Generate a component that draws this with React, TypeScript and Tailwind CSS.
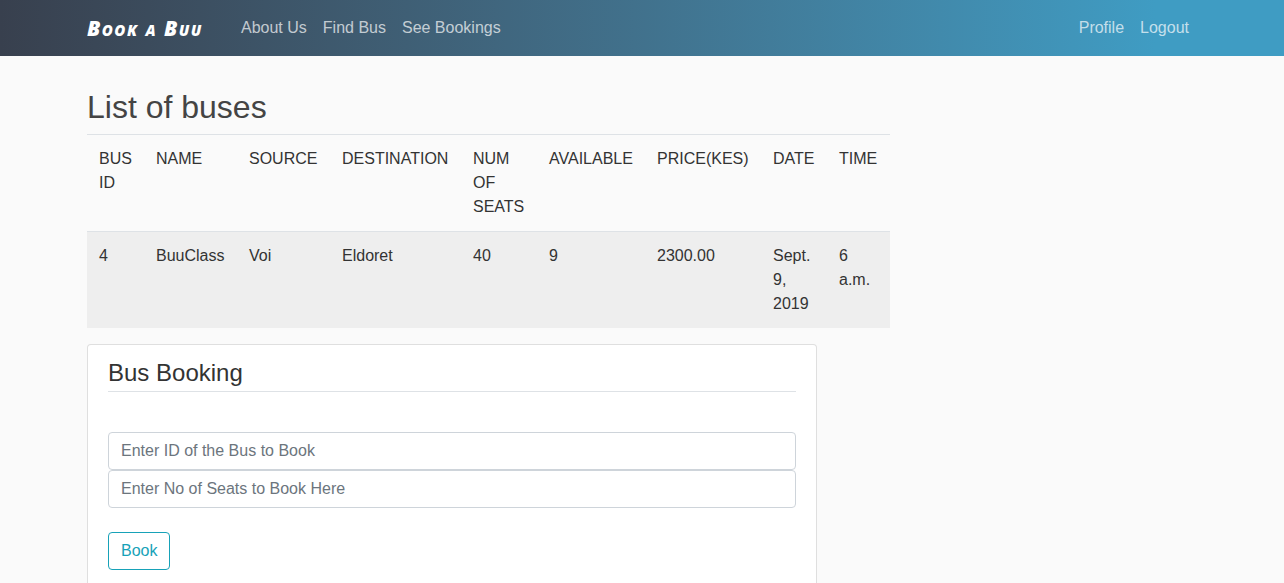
const headers = [
  { label: "BUS ID", width: "w-[57px]" },
  { label: "NAME", width: "w-[93px]" },
  { label: "SOURCE", width: "w-[93px]" },
  { label: "DESTINATION", width: "w-[131px]" },
  { label: "NUM OF SEATS", width: "w-[76px]" },
  { label: "AVAILABLE", width: "w-[108px]" },
  { label: "PRICE(KES)", width: "w-[116px]" },
  { label: "DATE", width: "w-[66px]" },
  { label: "TIME", width: "w-[63px]" },
];

const row = ["4", "BuuClass", "Voi", "Eldoret", "40", "9", "2300.00", "Sept. 9, 2019", "6 a.m."];

const App = () => {
  return (
    <div className="h-[583px] overflow-hidden bg-[#fafafa] font-['Liberation_Sans',Arial,sans-serif] text-base leading-6 text-[#333333]">
      <nav className="h-14 bg-gradient-to-r from-[#38404e] to-[#3f9cc3] to-[90%]">
        <div className="mx-auto flex h-full w-[1140px] items-center px-[15px]">
          <span className="mr-[22px] w-[124px] whitespace-nowrap font-['Open_Sans',sans-serif] text-[21px] font-extrabold italic tracking-[1.5px] text-white [font-variant:small-caps]">
            Book a Buu
          </span>
          <a className="px-2 text-[#ffffff]/70" href="#">About Us</a>
          <a className="px-2 text-[#ffffff]/70" href="#">Find Bus</a>
          <a className="px-2 text-[#ffffff]/70" href="#">See Bookings</a>
          <div className="ml-auto flex">
            <a className="px-2 text-[#ffffff]/70" href="#">Profile</a>
            <a className="px-2 text-[#ffffff]/70" href="#">Logout</a>
          </div>
        </div>
      </nav>

      <main className="mx-auto w-[1140px] px-[15px] pt-8">
        <h2 className="mb-2 text-[32px] leading-[38.4px] font-medium text-[#444444]">List of buses</h2>
        <table className="mb-4 w-[803px] table-fixed border-collapse">
          <thead>
            <tr>
              {headers.map((h) => (
                <th
                  key={h.label}
                  className={`${h.width} border-t border-[#dee2e6] p-3 text-left align-top font-normal`}
                >
                  {h.label}
                </th>
              ))}
            </tr>
          </thead>
          <tbody>
            <tr className="bg-[#eeeeee]">
              {row.map((cell) => (
                <td key={cell} className="border-t border-[#dee2e6] p-3 align-top">
                  {cell}
                </td>
              ))}
            </tr>
          </tbody>
        </table>

        <div className="w-[730px] rounded border border-black/[.125] bg-white px-5 pt-3 pb-20">
          <h4 className="border-b border-[#dee2e6] pb-0.5 text-2xl leading-[32px] font-medium">Bus Booking</h4>
          <form className="mt-10 flex flex-col">
            <input
              className="h-[38px] rounded border border-[#ced4da] px-3 text-[#495057] placeholder:text-[#6c757d]"
              placeholder="Enter ID of the Bus to Book"
            />
            <input
              className="h-[38px] rounded border border-[#ced4da] px-3 text-[#495057] placeholder:text-[#6c757d]"
              placeholder="Enter No of Seats to Book Here"
            />
            <div className="mt-6">
              <button
                type="button"
                className="h-[38px] rounded border border-[#17a2b8] px-3 text-[#17a2b8]"
              >
                Book
              </button>
            </div>
          </form>
        </div>
      </main>
    </div>
  );
};

export default App;
